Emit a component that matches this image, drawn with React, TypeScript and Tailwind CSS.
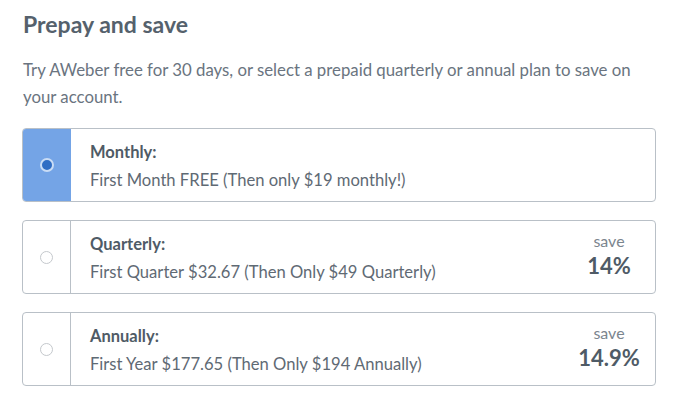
import React from "react";

type Plan = {
  title: string;
  desc: string;
  save?: string;
  selected?: boolean;
};

const plans: Plan[] = [
  { title: "Monthly:", desc: "First Month FREE (Then only $19 monthly!)", selected: true },
  { title: "Quarterly:", desc: "First Quarter $32.67 (Then Only $49 Quarterly)", save: "14%" },
  { title: "Annually:", desc: "First Year $177.65 (Then Only $194 Annually)", save: "14.9%" },
];

function PlanCard({ plan }: { plan: Plan }) {
  return (
    <div className="flex h-[74px] rounded-[4px] border border-[#b9c0c7] bg-white overflow-hidden">
      <div
        className={
          plan.selected
            ? "w-[48px] shrink-0 bg-[#74a4e6] flex items-center justify-center"
            : "w-[48px] shrink-0 border-r border-[#b9c0c7] flex items-center justify-center"
        }
      >
        {plan.selected ? (
          <div className="w-[14px] h-[14px] rounded-full bg-[#2f6dc4] border-2 border-[#c9dcf5]" />
        ) : (
          <div className="w-[13px] h-[13px] rounded-full border border-[#c4c8cc] bg-white" />
        )}
      </div>
      <div className="flex-1 flex flex-col justify-center pl-[19px] pt-[3px]">
        <div className="font-bold text-[16.5px] leading-[26px] text-[#4f5b66]">{plan.title}</div>
        <div className="text-[16.6px] leading-[30px] text-[#5f6a74]">{plan.desc}</div>
      </div>
      {plan.save && (
        <div className="w-[80px] mr-[6px] shrink-0 flex flex-col items-center justify-center pb-[4px]">
          <div className="text-[16px] leading-[22px] text-[#7b858e]">save</div>
          <div className="font-bold text-[22px] leading-[28px] text-[#4f5b66]">{plan.save}</div>
        </div>
      )}
    </div>
  );
}

export default function App() {
  return (
    <div
      className="w-[681px] h-[407px] bg-white overflow-hidden pl-[22px] pr-[25px] pt-[8px]"
      style={{ fontFamily: "Lato, 'Noto Sans', sans-serif" }}
    >
      <h1 className="text-[23px] leading-[32px] font-bold text-[#55616c] pl-[1px]">Prepay and save</h1>
      <p className="mt-[16px] text-[16.8px] leading-[27px] text-[#6a7480] pl-[1px] pr-[10px]">
        Try AWeber free for 30 days, or select a prepaid quarterly or annual plan to save on your account.
      </p>
      <div className="mt-[18px] flex flex-col gap-[18px]">
        {plans.map((p) => (
          <PlanCard key={p.title} plan={p} />
        ))}
      </div>
    </div>
  );
}
